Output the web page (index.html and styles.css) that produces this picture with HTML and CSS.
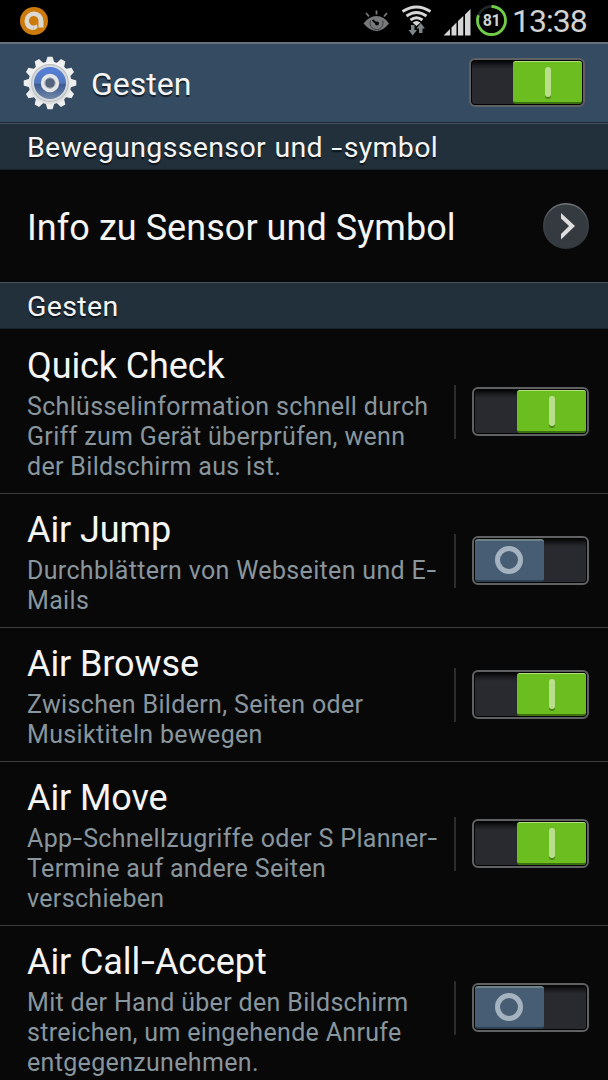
FILE: index.html
```html
<!DOCTYPE html>
<html lang="de">
<head>
  <meta charset="UTF-8" />
  <meta name="viewport" content="width=device-width, initial-scale=1.0"/>
  <title>Gesten</title>
  <link rel="stylesheet" href="styles.css">
</head>
<body>

  <div class="status-bar">
    <svg class="app-icon" width="28" height="28" viewBox="0 0 28 28">
      <circle cx="14" cy="14" r="14" fill="#cc7a0b"/>
      <path d="M23.500 20.500H18.500V14A4.800 4.800 0 1 0 13.500 18.500V23C8 23 4.500 19 4.500 14A9.500 9.500 0 0 1 23.500 14Z" fill="#dcd9d2"/>
      <path d="M13.500 18.500Q15.500 18.500 17 17.500L17.500 20.500Q16 22.500 13.500 23Z" fill="#dcd9d2"/>
    </svg>
    <div class="status-icons">
      <svg width="130" height="42" viewBox="0 0 130 42">
        <!-- smart stay eye -->
        <g fill="none" stroke="#77797a" stroke-width="1.800">
          <path d="M0.500 23.500Q6 16 13.500 16T26 23.500Q20 31 13.500 31T0.500 23.500Z" fill="#77797a" stroke="none"/>
          <path d="M7.500 20.500A6.500 6.500 0 1 0 19.500 20.500" stroke="#3a3b3c" stroke-width="1"/>
          <path d="M13.500 23.500L9.500 20" stroke="#000"/>
          <circle cx="14" cy="23.500" r="2" fill="#000" stroke="none"/>
          <path d="M13.500 10.500V14.500M3 13L6 16.500M24 13L21 16.500"/>
        </g>
        <!-- wifi -->
        <g fill="none" stroke="#d6d6d6" stroke-width="2.900">
          <path d="M39.500 11.500Q53.500 2.500 67.500 11.500"/>
          <path d="M43.500 16Q53.500 9 63.500 16"/>
          <path d="M47.500 20Q53.500 15.500 59.500 20"/>
          <path d="M49.500 22.500Q53.500 19.500 57.500 22.500L53.500 26Z" fill="#d6d6d6" stroke="none"/>
        </g>
        <path d="M48 25H51.500V30H54L49.700 35.500L45.500 30H48ZM56 33H59.500V28.500H62L57.700 23L53.500 28.500H56Z" fill="#7d8588"/>
        <!-- signal -->
        <path d="M81 35.500V35L87 29V35.500ZM88.500 35.500V27.500L93.500 22.500V35.500ZM95 35.500V21L100.300 16V35.500ZM102 35.500V14.500L107.500 9V35.500Z" fill="#d6d6d6"/>
      </svg>
      <div class="battery">
        <svg width="31" height="31" viewBox="0 0 31 31">
          <circle cx="15.500" cy="15.500" r="14" fill="none" stroke="#22272a" stroke-width="2.500"/>
          <circle cx="15.500" cy="15.500" r="14" fill="none" stroke="#70cd45" stroke-width="2.800" pathLength="100" stroke-dasharray="81 19" transform="rotate(-90 15.500 15.500)"/>
        </svg>
        <span class="battery-level">81</span>
      </div>
      <span class="clock">13:38</span>
    </div>
  </div>

  <div class="action-bar">
    <svg class="gear" width="54" height="54" viewBox="-27 -27 54 54">
      <defs>
        <linearGradient id="metal" x1="0" y1="0" x2="0" y2="1">
          <stop offset="0" stop-color="#f4f4f4"/>
          <stop offset="1" stop-color="#dcdedf"/>
        </linearGradient>
        <linearGradient id="blue" x1="0" y1="0" x2="0" y2="1">
          <stop offset="0" stop-color="#5580dc"/>
          <stop offset="0.500" stop-color="#5277bd"/>
          <stop offset="0.550" stop-color="#3c5b91"/>
          <stop offset="1" stop-color="#7287a8"/>
        </linearGradient>
        <path id="teeth" d="M-4.500 -20L-2.500 -26.300H2.500L4.500 -20ZM-4.500 20L-2.500 26.300H2.500L4.500 20Z"/>
      </defs>
      <g fill="#eeeeee">
        <use href="#teeth"/>
        <use href="#teeth" transform="rotate(30)"/>
        <use href="#teeth" transform="rotate(60)"/>
        <use href="#teeth" transform="rotate(90)"/>
        <use href="#teeth" transform="rotate(120)"/>
        <use href="#teeth" transform="rotate(150)"/>
      </g>
      <circle r="21.500" fill="url(#metal)"/>
      <circle r="19" fill="#b9bec3"/>
      <circle r="18" fill="#d5d9dc"/>
      <circle r="16" fill="url(#blue)"/>
      <circle r="7.200" fill="#53657c" stroke="#e3e5e7" stroke-width="4"/>
      <circle r="5.200" fill="none" stroke="#a8b0b8" stroke-width="1"/>
    </svg>
    <h1>Gesten</h1>
    <div class="switch on"><div class="thumb"><span class="mark"></span></div></div>
  </div>

  <h2 class="section">Bewegungssensor und <span class="hyphen">-</span>symbol</h2>
  <div class="info-row">
    <span class="title">Info zu Sensor und Symbol</span>
    <svg class="arrow" width="46" height="46" viewBox="0 0 46 46">
      <defs>
        <linearGradient id="rim" x1="0" y1="0" x2="0" y2="1">
          <stop offset="0" stop-color="#70757a"/>
          <stop offset="0.400" stop-color="#3e4348"/>
          <stop offset="1" stop-color="#33383d"/>
        </linearGradient>
      </defs>
      <circle cx="23" cy="23" r="22.300" fill="#353a40" stroke="url(#rim)" stroke-width="1.400"/>
      <path d="M18 10L32 23L18 36.500V31L26 23L18 15.500Z" fill="#dedede"/>
    </svg>
  </div>

  <h2 class="section">Gesten</h2>
  <div class="list">
    <div class="row">
      <div class="text">
        <h3 class="title">Quick Check</h3>
        <p>Schlüsselinformation schnell durch<br>Griff zum Gerät überprüfen, wenn<br>der Bildschirm aus ist.</p>
      </div>
      <div class="divider"></div>
      <div class="switch on"><div class="thumb"><span class="mark"></span></div></div>
    </div>
    <div class="row">
      <div class="text">
        <h3 class="title">Air Jump</h3>
        <p>Durchblättern von Webseiten und E<span class="hyphen">-</span><br>Mails</p>
      </div>
      <div class="divider"></div>
      <div class="switch off"><div class="thumb"><span class="mark"></span></div></div>
    </div>
    <div class="row">
      <div class="text">
        <h3 class="title">Air Browse</h3>
        <p>Zwischen Bildern, Seiten oder<br>Musiktiteln bewegen</p>
      </div>
      <div class="divider"></div>
      <div class="switch on"><div class="thumb"><span class="mark"></span></div></div>
    </div>
    <div class="row">
      <div class="text">
        <h3 class="title">Air Move</h3>
        <p>App<span class="hyphen">-</span>Schnellzugriffe oder S Planner<span class="hyphen">-</span><br>Termine auf andere Seiten<br>verschieben</p>
      </div>
      <div class="divider"></div>
      <div class="switch on"><div class="thumb"><span class="mark"></span></div></div>
    </div>
    <div class="row">
      <div class="text">
        <h3 class="title">Air Call<span class="hyphen">-</span>Accept</h3>
        <p>Mit der Hand über den Bildschirm<br>streichen, um eingehende Anrufe<br>entgegenzunehmen.</p>
      </div>
      <div class="divider"></div>
      <div class="switch off"><div class="thumb"><span class="mark"></span></div></div>
    </div>
  </div>

</body>
</html>
```
FILE: styles.css
```css
* {
  box-sizing: border-box;
}

body {
  margin: 0;
  height: 1080px;
  overflow: hidden;
  background-color: #080808;
  color: #f5f5f5;
  font-family: Roboto, sans-serif;
}

h1, h2, h3, p {
  margin: 0;
  font-weight: 400;
  white-space: nowrap;
}

.hyphen {
  display: inline-block;
  margin: 0 0.07em;
  transform: scaleX(1.4);
}

.status-bar {
  display: flex;
  justify-content: space-between;
  height: 42px;
  padding: 0 20px;
  background-color: #000;
}

.app-icon {
  margin-top: 7px;
}

.status-icons {
  display: flex;
  width: 225px;
}

.status-icons > svg {
  flex: none;
  margin-right: -17px;
}

.battery {
  display: grid;
  flex: none;
  place-items: center;
  width: 31px;
  height: 31px;
  margin: 5px 5px 0 0;
}

.battery > * {
  grid-area: 1 / 1;
}

.battery-level {
  font-size: 16px;
  font-weight: 700;
  letter-spacing: -0.5px;
  color: #cdd3d3;
}

.clock {
  font-size: 32px;
  line-height: 42px;
  letter-spacing: -1px;
  color: #d2d2d2;
}

.action-bar {
  display: flex;
  align-items: center;
  height: 81px;
  padding: 0 23px;
  background-color: #344b61;
  border-top: 2px solid #63717e;
  border-bottom: 1px solid #1d2a35;
}

.gear {
  margin-bottom: 1px;
}

.action-bar h1 {
  flex: 1;
  padding-top: 2px;
  margin-left: 14px;
  font-size: 32px;
  text-shadow: 0 2px 1px #16202a;
}

.action-bar .switch {
  width: 116px;
  margin-bottom: 1px;
}

.section {
  height: 47px;
  padding-left: 27px;
  font-size: 28.5px;
  line-height: 48px;
  letter-spacing: 0.35px;
  word-spacing: 1px;
  background-color: #22303c;
  border-top: 1px solid #45525d;
  border-bottom: 1px solid #18222a;
  text-shadow: 0 2px 1px #0d151b;
}

.info-row {
  display: flex;
  align-items: center;
  justify-content: space-between;
  height: 112px;
  padding: 0 19px 0 27px;
}

.title {
  font-size: 36px;
  line-height: 42px;
  letter-spacing: -0.1px;
}

.info-row .title {
  padding-top: 3px;
  letter-spacing: 0.05px;
}

.list {
  padding-top: 1px;
}

.row {
  display: flex;
  align-items: center;
  padding: 0 19px 0 27px;
  border-bottom: 1px solid #3b3d3f;
}

.row .text {
  width: 427px;
  padding: 15px 0 11px;
}

.row p {
  margin-top: 5px;
  font-size: 25px;
  line-height: 30px;
  letter-spacing: 0.33px;
  color: #89969e;
}

.divider {
  width: 2px;
  height: 54px;
  margin-right: 16px;
  background-color: #2b2c2e;
}

.switch {
  display: flex;
  flex: none;
  width: 117px;
  height: 49px;
  padding: 1px;
  border: 2px solid #606163;
  border-radius: 6px;
  background: linear-gradient(#000, #1a1b1e 5px, #292a2f 9px);
  box-shadow: inset 0 0 0 1px #050505;
}

.switch.on {
  justify-content: flex-end;
}

.switch.off {
  margin-bottom: 1px;
}

.thumb {
  display: flex;
  align-items: center;
  justify-content: center;
  width: 69px;
  height: 43px;
  border-radius: 3px;
}

.on .thumb {
  background-color: #6cbd20;
  border-top: 1px solid #b4e07c;
  border-bottom: 2px solid #3d7010;
}

.off .thumb {
  background-color: #465d73;
  border-top: 2px solid #6f8087;
  border-bottom: 2px solid #2d4050;
}

.on .mark {
  width: 6px;
  height: 30px;
  border-radius: 3px;
  background-color: #b9df8d;
  box-shadow: 0 2px 0 #4c8518;
}

.off .mark {
  width: 28px;
  height: 28px;
  margin: 0 1px 1px 0;
  border: 5px solid #a5b3c0;
  border-radius: 50%;
}
```
